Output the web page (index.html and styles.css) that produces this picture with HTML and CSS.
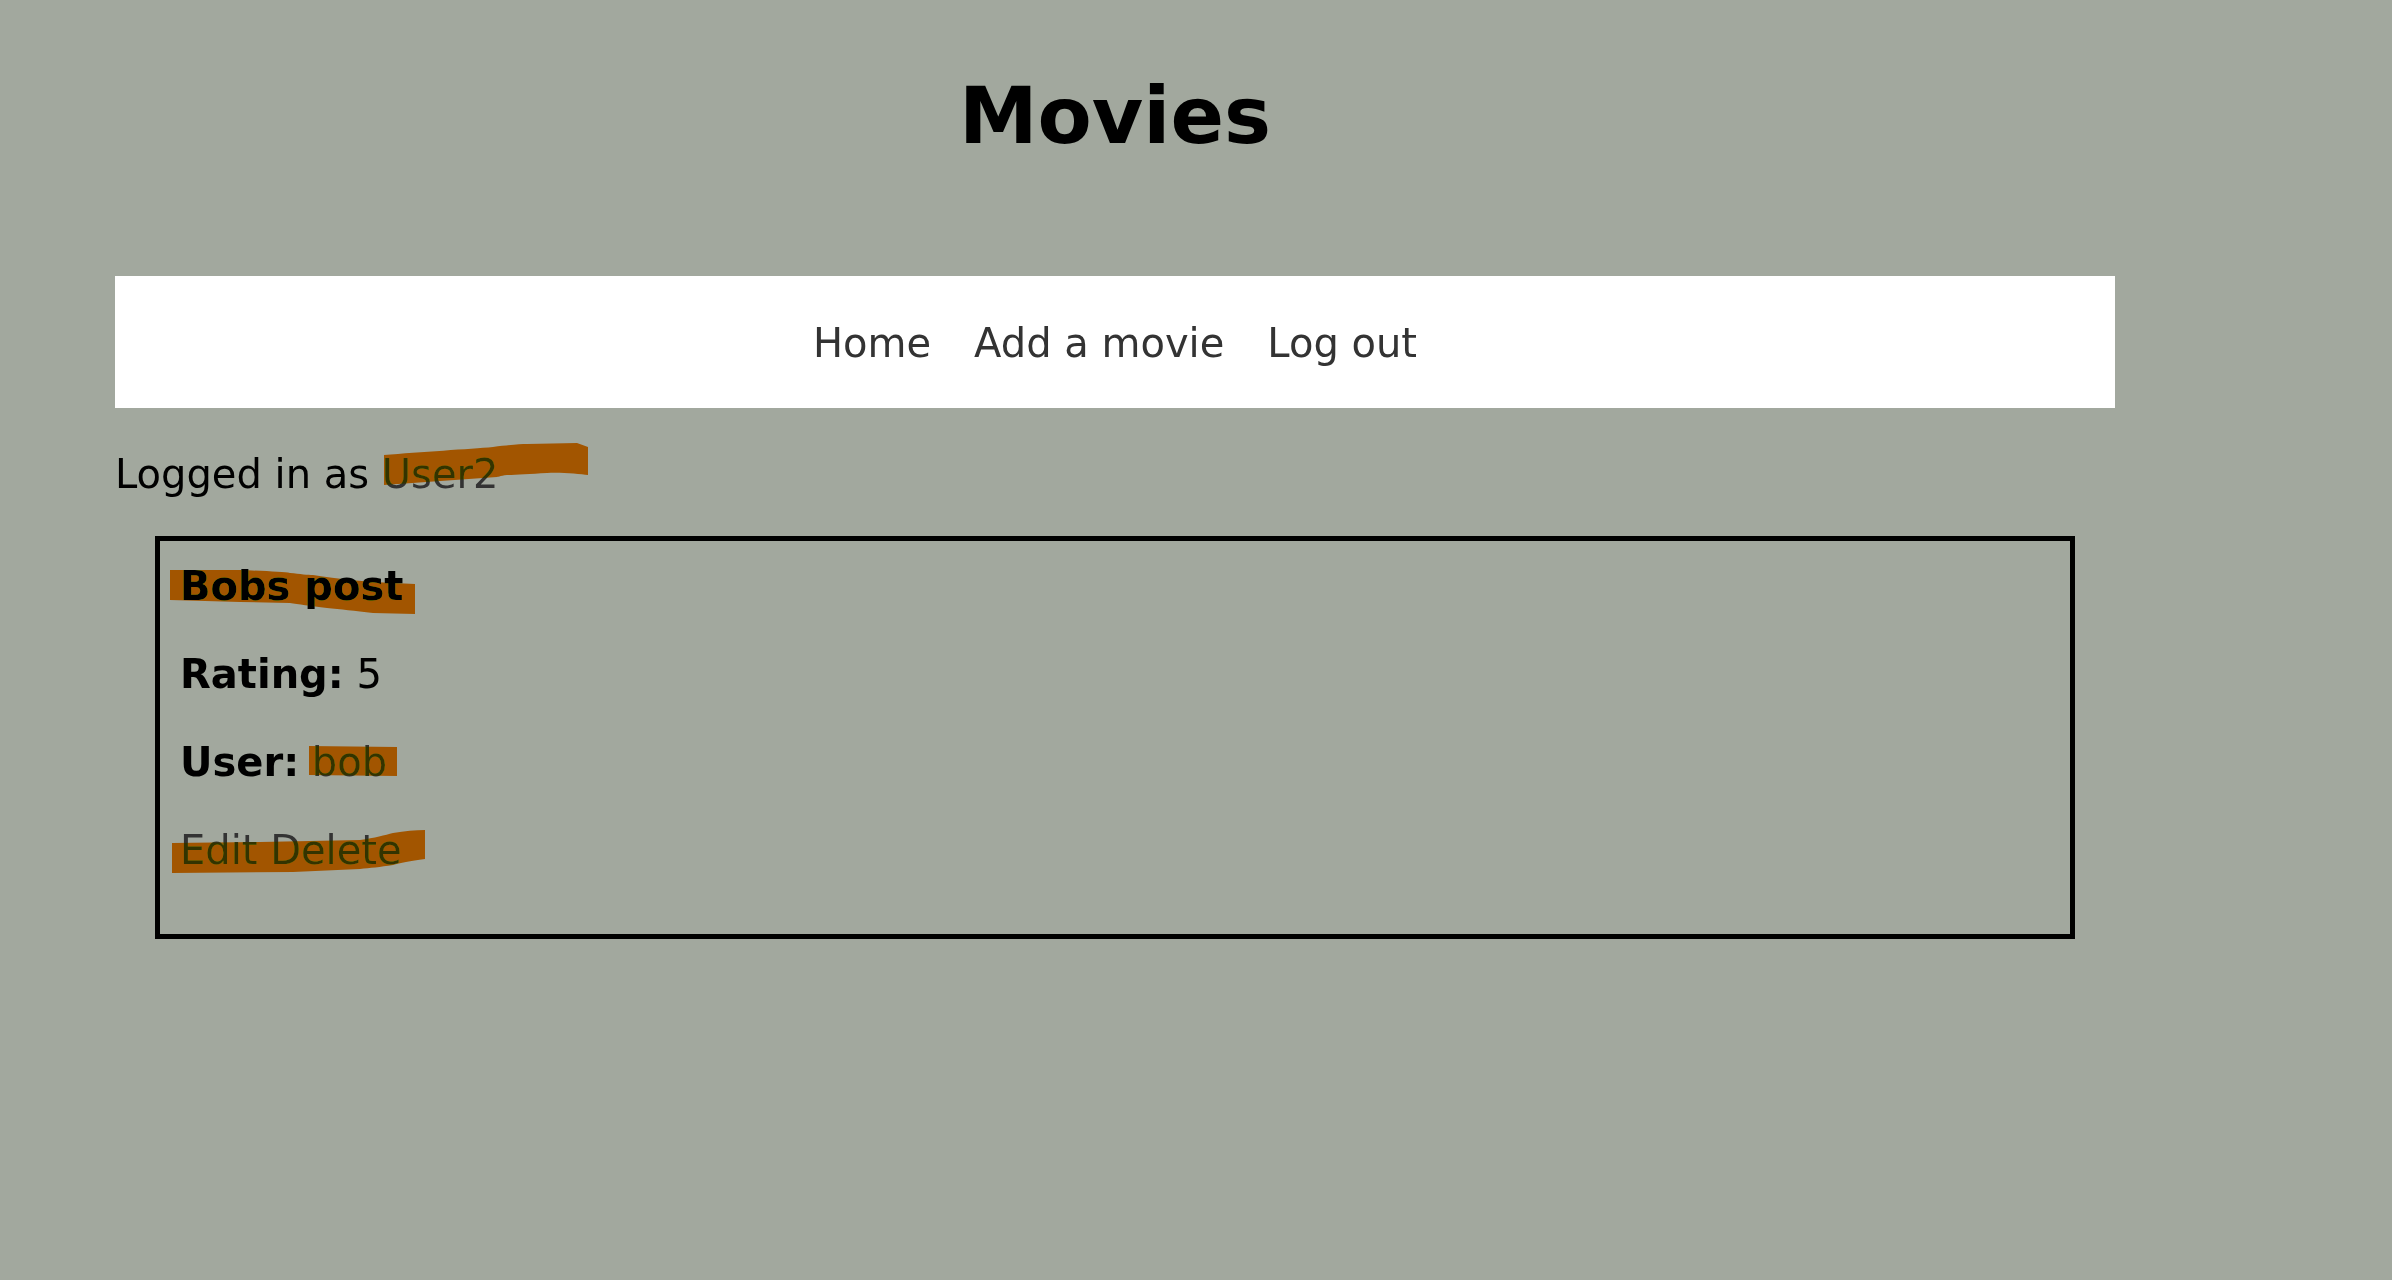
FILE: index.html
```html
<!DOCTYPE html>
<html lang="en">
<head>
<meta charset="utf-8">
<title>Movies</title>
<link rel="stylesheet" href="styles.css">
</head>
<body>
<div class="page">
  <h1 class="title">Movies</h1>
  <nav class="nav">
    <a class="nav-link" href="#">Home</a>
    <a class="nav-link" href="#">Add a movie</a>
    <a class="nav-link" href="#">Log out</a>
  </nav>
  <p class="logged">Logged in as <a class="link" href="#">User2</a></p>
  <div class="card">
    <div class="card-title">Bobs post</div>
    <p class="row"><strong>Rating:</strong> 5</p>
    <p class="row"><strong>User:</strong> <a class="link" href="#">bob</a></p>
    <p class="row last"><a class="link" href="#">Edit</a> <a class="link" href="#">Delete</a></p>
  </div>
</div>
<svg class="scribbles" width="2392" height="1280" viewBox="0 0 2392 1280" aria-hidden="true">
  <path d="M384 455 C420 452 470 449 493 447 C510 445 520 444 527 444 L577 443 L588 447 L588 475 C580 474 560 472 547 473 C530 474 515 475 507 475 C500 476 497 477 497 477 L384 485 Z"/>
  <path d="M170 570 L240 570 C265 571 285 572 290 573 C300 574 308 575 313 575 C340 579 360 581 373 582 L415 584 L415 614 L373 613 C355 611 340 609 327 608 C310 606 298 604 290 603 L240 602 L170 600 Z"/>
  <path d="M309 746 L397 747 L397 776 L309 775 Z"/>
  <path d="M172 843 L260 842 L360 840 C375 838 385 835 393 833 C405 831 415 830 425 830 L425 859 C410 861 400 863 393 865 C380 867 370 868 360 869 L293 872 L172 873 Z"/>
</svg>
</body>
</html>
```

FILE: styles.css
```css
html, body {
  margin: 0;
  padding: 0;
}

body {
  background: #a2a89e;
  font-family: "DejaVu Sans", "Liberation Sans", sans-serif;
  font-size: 40px;
  color: #000;
  position: relative;
  min-height: 1280px;
}

.page {
  width: 2000px;
  margin-left: 115px;
  padding-top: 68px;
}

.title {
  margin: 0 0 112px;
  font-size: 79px;
  font-weight: bold;
  line-height: 96px;
  text-align: center;
}

.nav {
  background: #fff;
  height: 132px;
  display: flex;
  justify-content: center;
  align-items: center;
  gap: 43px;
  padding-top: 1px;
  box-sizing: border-box;
}

.nav-link {
  color: #333;
  text-decoration: none;
  line-height: 48px;
}

.link {
  color: #333;
  text-decoration: none;
}

.logged {
  margin: 42px 0 38px;
  line-height: 48px;
}

.card {
  margin: 0 40px;
  border: 5px solid #000;
  padding: 21px 20px 20px;
}

.card-title {
  font-weight: bold;
  line-height: 48px;
}

.row {
  margin: 40px 0 0;
  line-height: 48px;
}

.row.last {
  margin-bottom: 40px;
}

.scribbles {
  position: absolute;
  top: 0;
  left: 0;
  fill: #a65500;
  mix-blend-mode: darken;
  pointer-events: none;
}
```
